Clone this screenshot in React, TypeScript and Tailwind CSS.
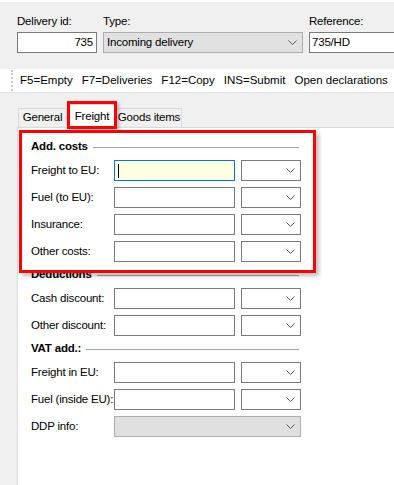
import React from 'react'

const font = { fontFamily: '"Liberation Sans", Arial, sans-serif' }

function Chevron() {
  return (
    <svg width="9" height="5" viewBox="0 0 9 5" className="shrink-0">
      <path d="M0.5 0.5 L4.5 4.5 L8.5 0.5" fill="none" stroke="#555" strokeWidth="1" />
    </svg>
  )
}

function TextBox({ focused = false }: { focused?: boolean }) {
  if (focused) {
    return (
      <div className="w-[121px] h-[21px] border border-[#0078d7] bg-[#ffffe1] flex items-center pl-[3px]">
        <div className="w-[1px] h-[14px] bg-black" />
      </div>
    )
  }
  return <div className="w-[121px] h-[21px] border border-[#7a7a7a] bg-white" />
}

function Combo() {
  return (
    <div className="w-[60px] h-[21px] border border-[#7a7a7a] bg-white flex items-center justify-end pr-[5px]">
      <Chevron />
    </div>
  )
}

function Row({ label, focused = false }: { label: string; focused?: boolean }) {
  return (
    <div className="flex items-center h-[21px]">
      <div className="w-[83px] whitespace-nowrap leading-none">{label}</div>
      <TextBox focused={focused} />
      <div className="w-[6px]" />
      <Combo />
    </div>
  )
}

function GroupHead({ title }: { title: string }) {
  return (
    <div className="flex items-center h-[14px] w-[268px]">
      <span className="font-bold leading-none whitespace-nowrap">{title}</span>
      <div className="flex-1 h-[1px] bg-[#a0a0a0] ml-[5px]" />
    </div>
  )
}

export default function App() {
  return (
    <div
      className="relative w-[394px] h-[485px] overflow-hidden bg-[#f0f0f0] text-black text-[11.5px] tracking-[-0.2px]"
      style={font}
    >
      {/* header fields */}
      <div className="h-[2px] bg-white" />
      <div className="h-[67px] flex pl-[17px] pt-[12px]">
        <div className="flex flex-col w-[86px]">
          <div className="leading-[14px] h-[18px] whitespace-nowrap">Delivery id:</div>
          <div className="w-[80px] h-[21px] border border-[#7a7a7a] bg-white flex items-center justify-end pr-[3px]">
            735
          </div>
        </div>
        <div className="flex flex-col w-[206px]">
          <div className="leading-[14px] h-[18px]">Type:</div>
          <div className="w-[200px] h-[21px] border border-[#adadad] bg-[#e1e1e1] flex items-center justify-between pl-[3px] pr-[5px] whitespace-nowrap">
            <span>Incoming delivery</span>
            <Chevron />
          </div>
        </div>
        <div className="flex flex-col flex-1">
          <div className="leading-[14px] h-[18px]">Reference:</div>
          <div className="h-[21px] border border-r-0 border-[#7a7a7a] bg-white flex items-center pl-[2px]">
            735/HD
          </div>
        </div>
      </div>

      {/* toolbar */}
      <div className="h-[24px] bg-white border-b border-[#e3e3e3] flex items-center">
        <div className="ml-[11px] w-[2px] h-[21px] border-l-2 border-dotted border-[#c8c8c8]" />
        <div className="ml-[7px] flex gap-[9px] whitespace-nowrap tracking-normal">
          <span>F5=Empty</span>
          <span>F7=Deliveries</span>
          <span>F12=Copy</span>
          <span>INS=Submit</span>
          <span>Open declarations</span>
        </div>
      </div>

      {/* tabs */}
      <div className="ml-[18px] mt-[15px] h-[19px] flex items-end whitespace-nowrap">
        <div className="w-[49px] h-[19px] border border-b-0 border-[#d9d9d9] bg-[#f0f0f0] flex items-center justify-center">General</div>
        <div className="w-[50px] h-[24px] -mb-[1px] relative z-10 border border-b-0 border-[#d9d9d9] bg-white flex items-center justify-center">Freight</div>
        <div className="w-[65px] h-[19px] border border-b-0 border-l-0 border-[#d9d9d9] bg-[#f0f0f0] flex items-center justify-center">Goods items</div>
      </div>

      {/* panel */}
      <div className="ml-[17px] h-[360px] bg-white border-l border-t border-[#d9d9d9] pl-[13px] pt-[12px] flex flex-col">
        <GroupHead title="Add. costs" />
        <div className="mt-[6px] flex flex-col gap-[6px]">
          <Row label="Freight to EU:" focused />
          <Row label="Fuel (to EU):" />
          <Row label="Insurance:" />
          <Row label="Other costs:" />
        </div>
        <div className="mt-[6px]">
          <GroupHead title="Deductions" />
        </div>
        <div className="mt-[6px] flex flex-col gap-[6px]">
          <Row label="Cash discount:" />
          <Row label="Other discount:" />
        </div>
        <div className="mt-[6px]">
          <GroupHead title="VAT add.:" />
        </div>
        <div className="mt-[6px] flex flex-col gap-[6px]">
          <Row label="Freight in EU:" />
          <Row label="Fuel (inside EU):" />
          <div className="flex items-center h-[21px]">
            <div className="w-[83px] leading-none">DDP info:</div>
            <div className="w-[187px] h-[21px] border border-[#adadad] bg-[#e0e0e0] flex items-center justify-end pr-[5px]">
              <Chevron />
            </div>
          </div>
        </div>
      </div>

      {/* annotation boxes */}
      <div className="absolute left-[67px] top-[101px] w-[50px] h-[28px] border-[3px] border-[#ff0000] shadow-[2px_2px_3px_rgba(0,0,0,0.25)] z-20" />
      <div className="absolute left-[19px] top-[130px] w-[297px] h-[143px] border-[3px] border-[#ff0000] shadow-[3px_3px_4px_rgba(0,0,0,0.25)] z-20" />
    </div>
  )
}
